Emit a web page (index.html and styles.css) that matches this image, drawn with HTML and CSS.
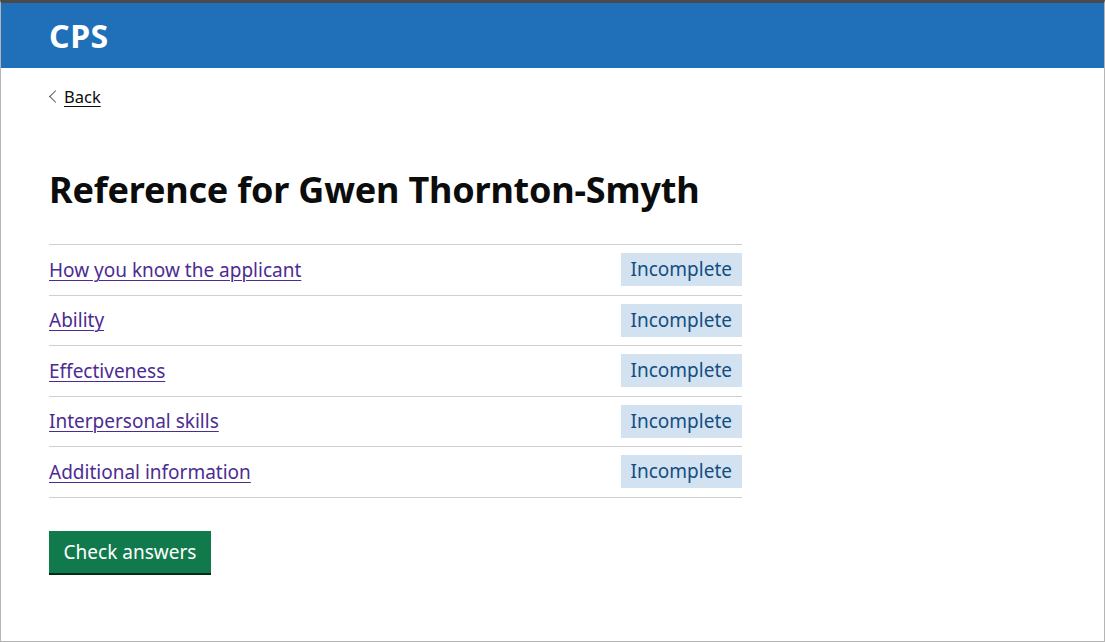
FILE: index.html
```html
<!DOCTYPE html>
<html lang="en">
<head>
<meta charset="utf-8">
<title>Reference for Gwen Thornton-Smyth</title>
<link rel="stylesheet" href="styles.css">
</head>
<body>
<div class="frame">
  <header class="header">
    <div class="container"><span class="logo">CPS</span></div>
  </header>
  <main class="container main">
    <a class="back" href="#">Back</a>
    <h1 class="heading">Reference for Gwen Thornton-Smyth</h1>
    <ul class="tasks">
      <li class="task"><a href="#" class="task-link">How you know the applicant</a><span class="tag">Incomplete</span></li>
      <li class="task"><a href="#" class="task-link">Ability</a><span class="tag">Incomplete</span></li>
      <li class="task"><a href="#" class="task-link">Effectiveness</a><span class="tag">Incomplete</span></li>
      <li class="task"><a href="#" class="task-link">Interpersonal skills</a><span class="tag">Incomplete</span></li>
      <li class="task"><a href="#" class="task-link">Additional information</a><span class="tag">Incomplete</span></li>
    </ul>
    <button class="button" type="button">Check answers</button>
  </main>
</div>
</body>
</html>
```
FILE: styles.css
```css
* { box-sizing: border-box; }
html, body { margin: 0; padding: 0; background: #fff; }
body {
  font-family: "Noto Sans", Arial, sans-serif;
  color: #0b0c0c;
}
.frame {
  width: 1105px;
  height: 642px;
  border-top: 3px solid #4a4a4a;
  border-left: 1px solid #b5b5b5;
  border-right: 1px solid #b5b5b5;
  border-bottom: 1px solid #b5b5b5;
  overflow: hidden;
}
.container { padding-left: 48px; }
.header {
  background: #1f70b8;
  height: 65px;
  display: flex;
  align-items: center;
}
.logo {
  color: #fff;
  font-weight: 700;
  font-size: 32px;
  letter-spacing: 0.6px;
}
.main { padding-top: 18px; width: 741px; }
.back {
  display: inline-block;
  position: relative;
  padding-left: 15px;
  font-size: 16.5px;
  color: #0b0c0c;
  text-decoration: underline;
  text-underline-offset: 3px;
  line-height: 22px;
}
.back::before {
  content: "";
  position: absolute;
  left: 2px;
  top: 6px;
  width: 8px;
  height: 8px;
  border-left: 1px solid #505a5f;
  border-bottom: 1px solid #505a5f;
  transform: rotate(45deg);
}
.heading {
  font-size: 36px;
  font-weight: 700;
  margin: 62px 0 34px;
  line-height: 40px;
  letter-spacing: -0.2px;
}
.tasks {
  list-style: none;
  margin: 0;
  padding: 0;
  border-top: 1px solid #cfcfcf;
}
.task {
  display: flex;
  justify-content: space-between;
  align-items: center;
  height: 50.5px;
  border-bottom: 1px solid #cfcfcf;
}
.task-link {
  font-size: 19px;
  color: #4c2c92;
  text-decoration: underline;
  text-underline-offset: 3px;
  text-decoration-thickness: 1px;
}
.tag {
  background: #d2e2f1;
  color: #144e81;
  font-size: 19px;
  padding: 0 10px;
  height: 33px;
  line-height: 33px;
}
.button {
  margin-top: 33px;
  background: #117a4c;
  color: #fff;
  border: 0;
  box-shadow: 0 2px 0 #002d18;
  font-family: inherit;
  font-size: 19px;
  padding: 0 13px;
  height: 42px;
  width: 162px;
  cursor: pointer;
}
```
